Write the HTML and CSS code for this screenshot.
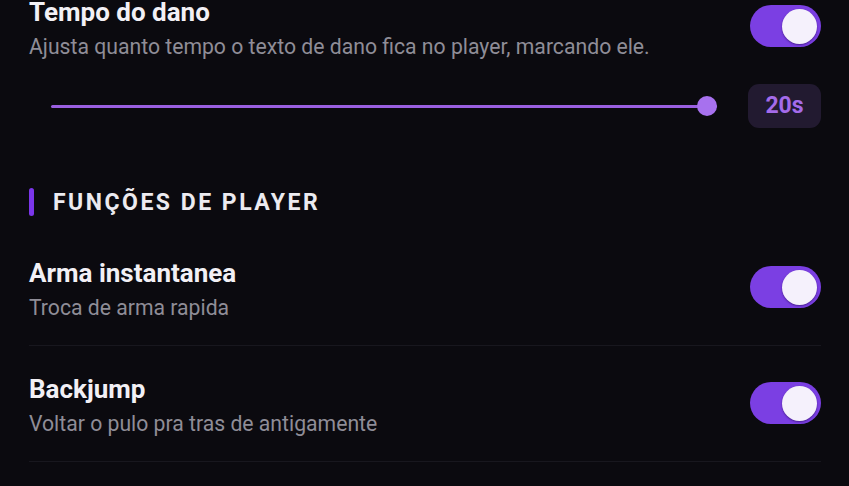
FILE: index.html
```html
<!DOCTYPE html>
<html lang="pt-BR">

<head>
    <meta charset="UTF-8">
    <meta name="viewport" content="width=device-width, initial-scale=1.0">
    <title>Configurações</title>
    <link rel="stylesheet" href="styles.css">
</head>

<body>
    <div class="panel">
        <div class="setting first">
            <div class="setting-text">
                <div class="setting-title">Tempo do dano</div>
                <div class="setting-desc">Ajusta quanto tempo o texto de dano fica no player, marcando ele.</div>
            </div>
            <label class="toggle">
                <input type="checkbox" checked>
                <span class="knob"></span>
            </label>
        </div>

        <div class="slider-row">
            <input type="range" class="slider" min="1" max="20" value="20">
            <div class="slider-value">20s</div>
        </div>

        <h2 class="section-title">Funções de player</h2>

        <div class="setting">
            <div class="setting-text">
                <div class="setting-title">Arma instantanea</div>
                <div class="setting-desc">Troca de arma rapida</div>
            </div>
            <label class="toggle">
                <input type="checkbox" checked>
                <span class="knob"></span>
            </label>
        </div>

        <div class="setting">
            <div class="setting-text">
                <div class="setting-title">Backjump</div>
                <div class="setting-desc">Voltar o pulo pra tras de antigamente</div>
            </div>
            <label class="toggle">
                <input type="checkbox" checked>
                <span class="knob"></span>
            </label>
        </div>
    </div>
</body>

</html>
```

FILE: styles.css
```css
body {
    margin: 0;
    background-color: #0b0a0f;
    color: #f2f0f5;
    font-family: Roboto, "Noto Sans", Arial, sans-serif;
    overflow: hidden;
}

.panel {
    margin-top: -4px;
    padding: 0 28px 0 29px;
}

/* Linha de configuracao */
.setting {
    display: flex;
    align-items: center;
    justify-content: space-between;
    padding: 27px 0 23px;
    border-bottom: 1px solid #18171e;
}

.setting.first {
    padding: 0;
    border-bottom: none;
}

.setting-title {
    font-size: 26px;
    line-height: 32px;
    font-weight: 700;
}

.setting-desc {
    margin-top: 5px;
    font-size: 21.2px;
    line-height: 28px;
    color: #8f8d97;
}

/* Toggle */
.toggle {
    position: relative;
    flex-shrink: 0;
    width: 71px;
    height: 42px;
    border-radius: 21px;
    background-color: #7b3fe3;
    margin-top: -5px;
}

.toggle input {
    display: none;
}

.knob {
    position: absolute;
    top: 4px;
    right: 4px;
    width: 35px;
    height: 35px;
    border-radius: 50%;
    background-color: #f5f1fc;
    box-shadow: 0 1px 2px rgba(40, 10, 90, 0.6);
}

/* Slider */
.slider-row {
    display: flex;
    align-items: center;
    margin-top: 23px;
    padding-left: 22px;
}

.slider {
    -webkit-appearance: none;
    appearance: none;
    flex: 1;
    height: 20px;
    margin: 0 31px 0 0;
    background: transparent;
}

.slider::-webkit-slider-runnable-track {
    height: 3px;
    background-color: #9a5fe0;
    border-radius: 2px;
}

.slider::-webkit-slider-thumb {
    -webkit-appearance: none;
    width: 20px;
    height: 20px;
    margin-top: -8.5px;
    border-radius: 50%;
    background-color: #a771ee;
    border: none;
}

.slider-value {
    width: 73px;
    height: 44px;
    line-height: 44px;
    text-align: center;
    border-radius: 11px;
    background-color: #221a30;
    color: #a46bea;
    font-size: 23px;
    font-weight: 700;
}

/* Titulo de secao */
.section-title {
    display: flex;
    align-items: center;
    margin: 60px 0 14px;
    height: 28px;
    font-size: 23px;
    font-weight: 700;
    letter-spacing: 2.5px;
    text-transform: uppercase;
    color: #ecebf0;
}

.section-title::before {
    content: "";
    width: 5px;
    height: 28px;
    border-radius: 3px;
    background-color: #7b36ea;
    margin-right: 19px;
}
```
